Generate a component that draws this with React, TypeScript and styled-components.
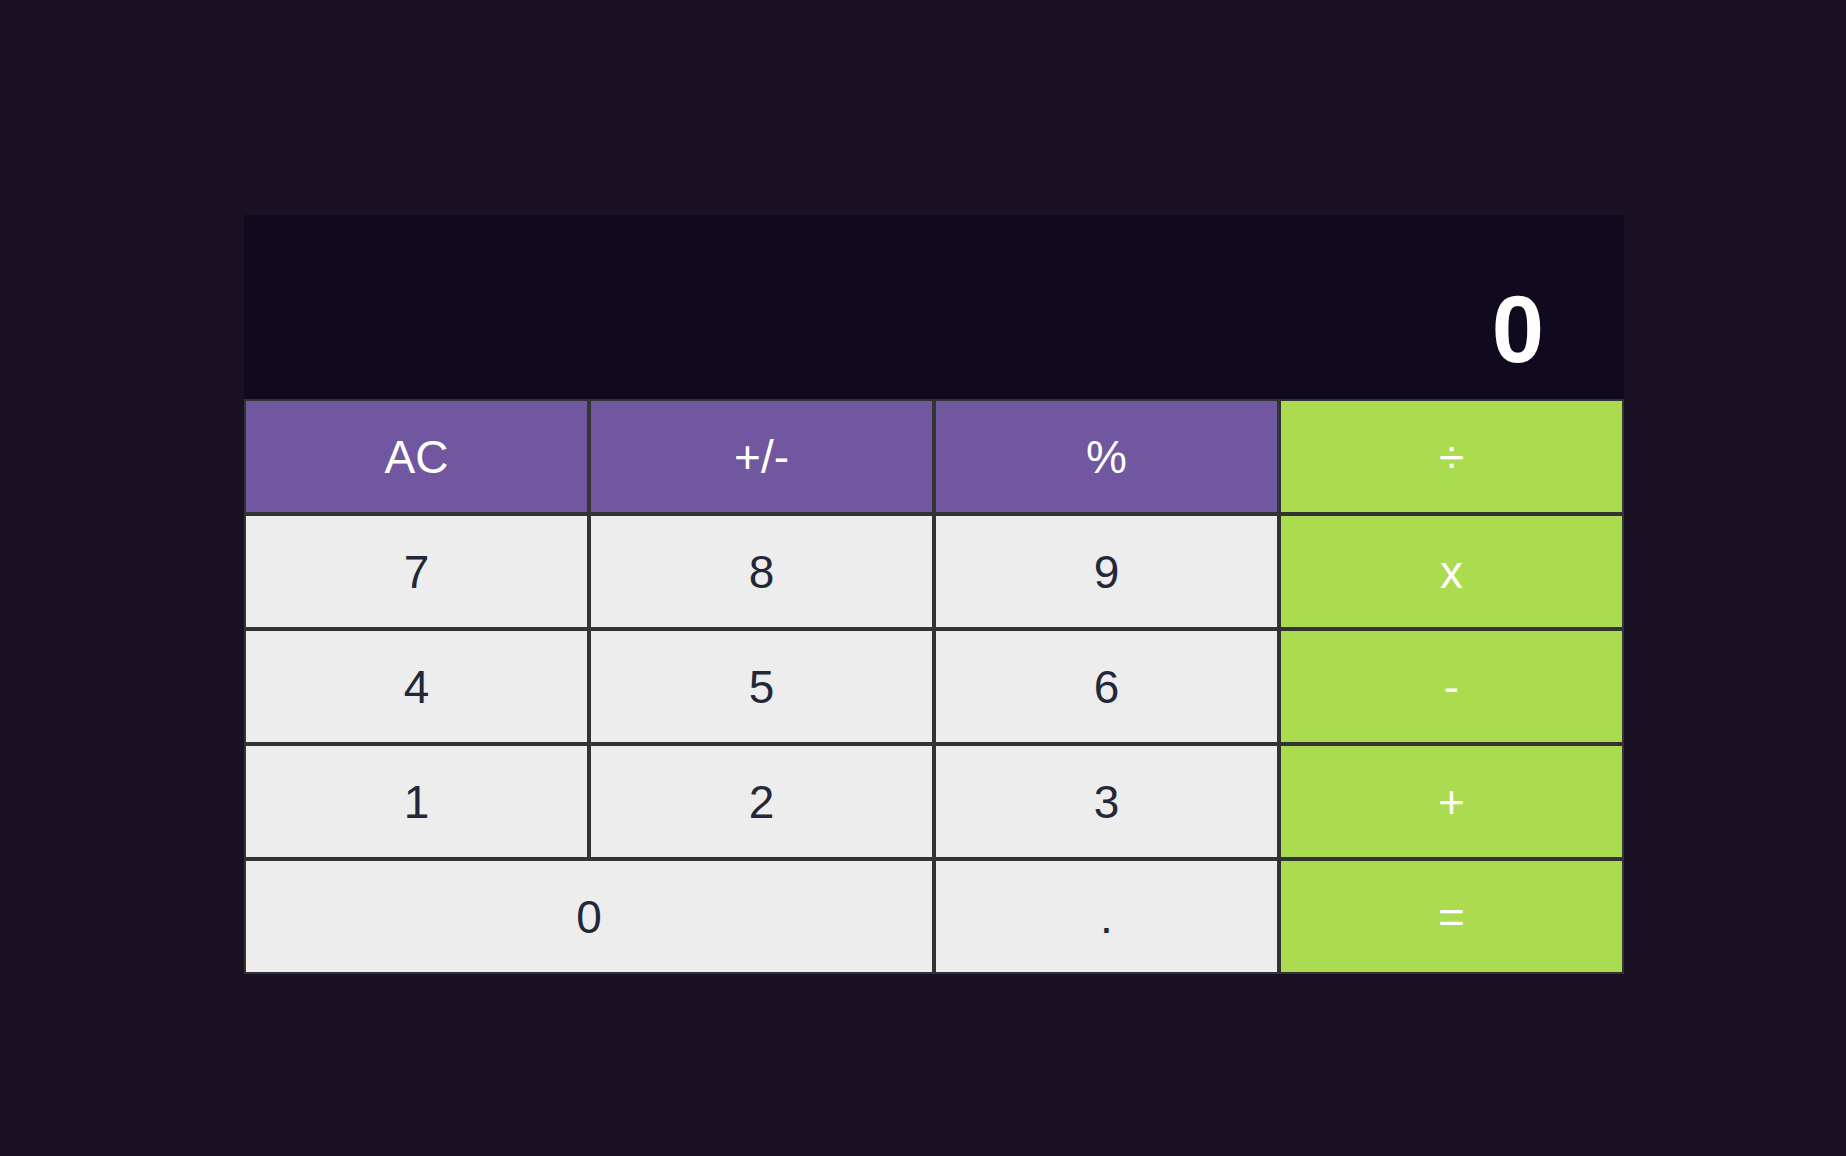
import React from 'react';
import styled, { createGlobalStyle } from 'styled-components';

const GlobalStyle = createGlobalStyle`
  html, body {
    margin: 0;
    padding: 0;
    background: #1a1125;
    font-family: 'Liberation Sans', Arial, sans-serif;
  }
`;

const Page = styled.div`
  min-height: 1156px;
  box-sizing: border-box;
  padding: 215px 0 0 244px;
  display: flex;
  justify-content: flex-start;
`;

const Calculator = styled.div`
  width: 1380px;
  display: flex;
  flex-direction: column;
`;

const Display = styled.div`
  height: 184px;
  background: #110a1e;
  color: #ffffff;
  display: flex;
  align-items: flex-end;
  justify-content: flex-end;
  padding: 0 80px 22px 0;
  box-sizing: border-box;
  font-size: 94px;
  font-weight: bold;
  line-height: 1;
`;

const Keypad = styled.div`
  display: grid;
  grid-template-columns: repeat(4, 1fr);
  grid-auto-rows: 115px;
`;

type Kind = 'fn' | 'num' | 'op';

const colours: Record<Kind, { bg: string; fg: string }> = {
  fn: { bg: '#7156a0', fg: '#ffffff' },
  num: { bg: '#ededed', fg: '#232838' },
  op: { bg: '#abdb4e', fg: '#ffffff' },
};

const Key = styled.button<{ $kind: Kind; $wide?: boolean }>`
  grid-column: ${(p) => (p.$wide ? 'span 2' : 'auto')};
  border: 2px solid #333333;
  margin: 0;
  padding: 0;
  background: ${(p) => colours[p.$kind].bg};
  color: ${(p) => colours[p.$kind].fg};
  font-family: 'Liberation Sans', Arial, sans-serif;
  font-size: 46px;
  cursor: pointer;
  display: flex;
  align-items: center;
  justify-content: center;
`;

const keys: { label: string; kind: Kind; wide?: boolean }[] = [
  { label: 'AC', kind: 'fn' },
  { label: '+/-', kind: 'fn' },
  { label: '%', kind: 'fn' },
  { label: '÷', kind: 'op' },
  { label: '7', kind: 'num' },
  { label: '8', kind: 'num' },
  { label: '9', kind: 'num' },
  { label: 'x', kind: 'op' },
  { label: '4', kind: 'num' },
  { label: '5', kind: 'num' },
  { label: '6', kind: 'num' },
  { label: '-', kind: 'op' },
  { label: '1', kind: 'num' },
  { label: '2', kind: 'num' },
  { label: '3', kind: 'num' },
  { label: '+', kind: 'op' },
  { label: '0', kind: 'num', wide: true },
  { label: '.', kind: 'num' },
  { label: '=', kind: 'op' },
];

export default function App() {
  return (
    <>
      <GlobalStyle />
      <Page>
        <Calculator>
          <Display>0</Display>
          <Keypad>
            {keys.map((k) => (
              <Key key={k.label} $kind={k.kind} $wide={k.wide}>
                {k.label}
              </Key>
            ))}
          </Keypad>
        </Calculator>
      </Page>
    </>
  );
}
